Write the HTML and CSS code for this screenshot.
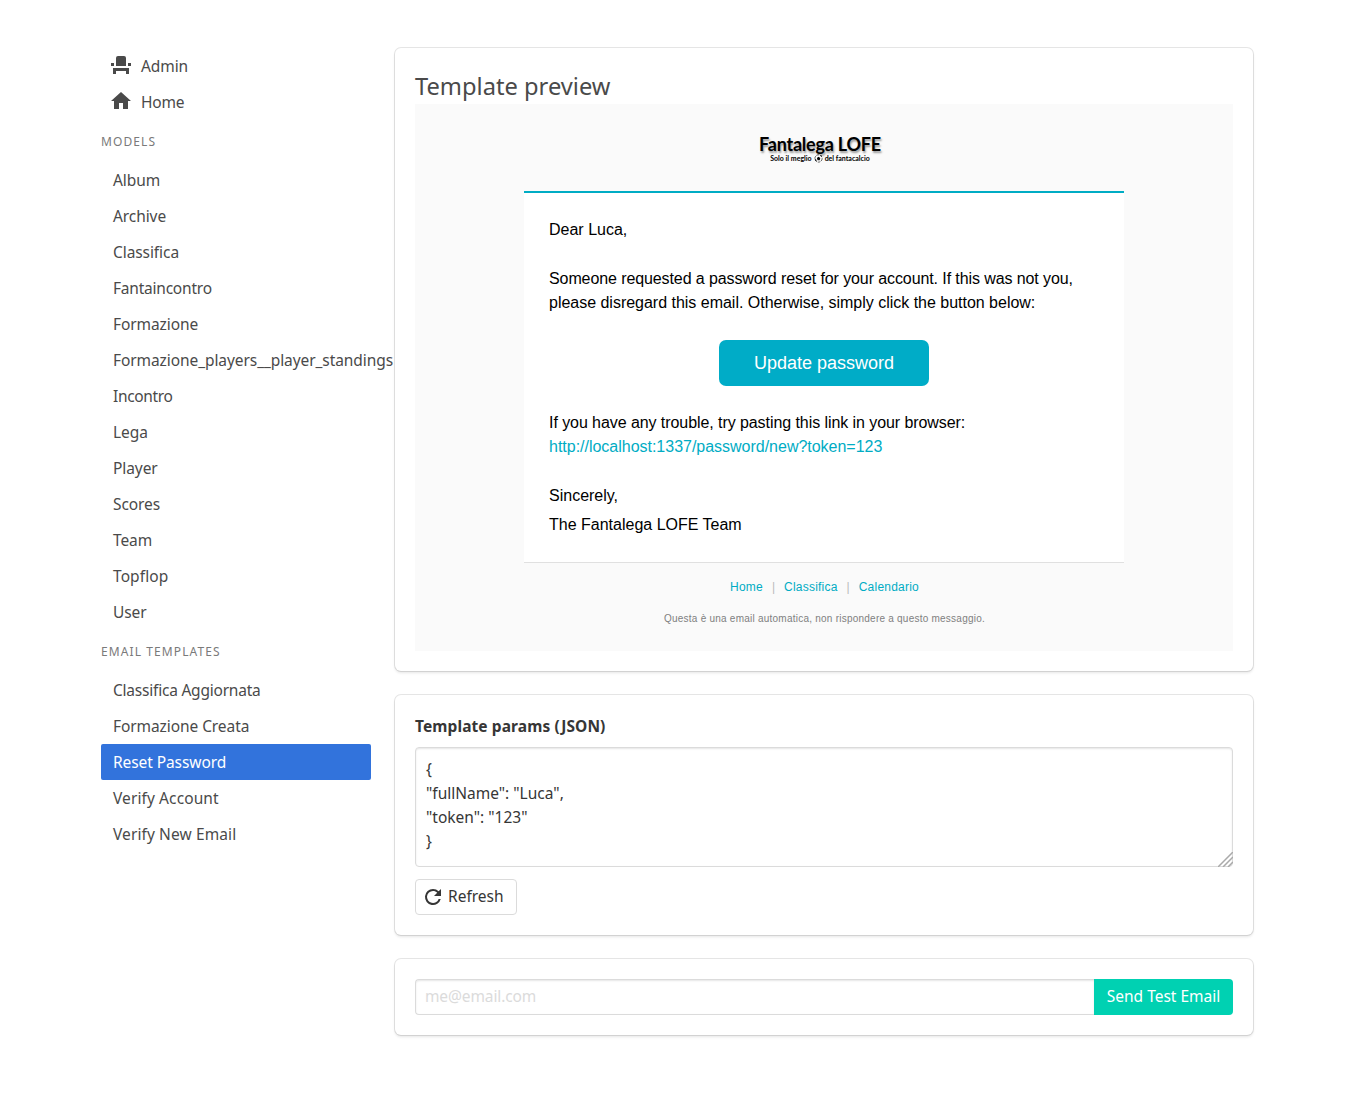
FILE: index.html
```html
<!DOCTYPE html>
<html lang="en">
<head>
<meta charset="utf-8">
<title>Template preview</title>
<link rel="stylesheet" href="styles.css">
</head>
<body>
<div class="container">
  <aside class="menu">
    <ul class="menu-list main-nav">
      <li><a><svg class="icon" viewBox="0 0 24 24"><path d="M9 3h6a2 2 0 0 1 2 2v8H7V5a2 2 0 0 1 2-2zM4 15h16v6h-3v-3H7v3H4zM2 10h3v3H2zM19 10h3v3h-3z"/></svg><span>Admin</span></a></li>
      <li><a><svg class="icon" viewBox="0 0 24 24"><path d="M10 20v-6h4v6h5v-8h3L12 3 2 12h3v8z"/></svg><span class="tight">Home</span></a></li>
    </ul>
    <p class="menu-label">Models</p>
    <ul class="menu-list">
      <li><a>Album</a></li>
      <li><a>Archive</a></li>
      <li><a>Classifica</a></li>
      <li><a class="tight">Fantaincontro</a></li>
      <li><a>Formazione</a></li>
      <li><a>Formazione_players__player_standings</a></li>
      <li><a class="tighter">Incontro</a></li>
      <li><a>Lega</a></li>
      <li><a>Player</a></li>
      <li><a>Scores</a></li>
      <li><a>Team</a></li>
      <li><a class="loose">Topflop</a></li>
      <li><a>User</a></li>
    </ul>
    <p class="menu-label">Email templates</p>
    <ul class="menu-list">
      <li><a class="tight">Classifica Aggiornata</a></li>
      <li><a>Formazione Creata</a></li>
      <li><a class="is-active">Reset Password</a></li>
      <li><a class="loose">Verify Account</a></li>
      <li><a class="loose">Verify New Email</a></li>
    </ul>
  </aside>
  <main class="content">
    <section class="box">
      <h1 class="title">Template preview</h1>
      <div class="email">
        <div class="email-header">
          <div class="logo">
            <span class="logo-name">Fantalega LOFE</span>
            <span class="logo-tag"><span>Solo il meglio</span><svg class="ball" viewBox="0 0 10 10"><circle cx="5" cy="5" r="4" fill="#fff" stroke="#222" stroke-width=".8" stroke-dasharray="3 1"/><path d="M5 3l2 1.5L6.3 7H4L3.2 4.5zM8 1l1 2-2-1zM1 7l2 1-1-3z"/></svg><span>del fantacalcio</span></span>
          </div>
        </div>
        <div class="email-body">
          <p>Dear Luca,</p>
          <p><span class="line-long">Someone requested a password reset for your account. If this was not you,</span><br><span class="line">please disregard this email. Otherwise, simply click the button below:</span></p>
          <div class="email-action"><a class="email-button">Update password</a></div>
          <p><span class="line-mid">If you have any trouble, try pasting this link in your browser:</span><br><a class="link line">http://localhost:1337/password/new?token=123</a></p>
          <p>Sincerely,</p>
          <p class="team">The Fantalega LOFE Team</p>
        </div>
        <div class="email-links"><a>Home</a><i>|</i><a>Classifica</a><i>|</i><a>Calendario</a></div>
        <p class="email-note">Questa è una email automatica, non rispondere a questo messaggio.</p>
      </div>
    </section>
    <section class="box">
      <label class="label" for="params">Template params (JSON)</label>
      <div class="control">
        <textarea class="textarea" id="params">{
"fullName": "Luca",
"token": "123"
}</textarea>
        <svg class="grip" viewBox="0 0 15 15"><path d="M0 15L15 0M5 15L15 5M10 15l5-5"/></svg>
      </div>
      <button class="button"><svg class="refresh" viewBox="0 0 24 24"><path d="M17.65 6.35A7.96 7.96 0 0 0 12 4a8 8 0 1 0 7.73 10h-2.08A6 6 0 1 1 12 6c1.66 0 3.14.69 4.22 1.78L13 11h7V4z"/></svg><span>Refresh</span></button>
    </section>
    <section class="box field">
      <input class="input" placeholder="me@email.com">
      <button class="send">Send Test Email</button>
    </section>
  </main>
</div>
</body>
</html>
```
FILE: styles.css
```css
* { box-sizing: border-box; margin: 0; padding: 0; }
body { background: #fff; color: #4a4a4a; font: 15.5px/24px "Noto Sans", sans-serif; height: 1107px; overflow: hidden; }
.container { display: flex; gap: 24px; width: 1152px; margin: 48px auto 0; }
.menu { width: 270px; flex: none; }
.menu-list { list-style: none; letter-spacing: -.08px; }
.menu-list a { display: flex; align-items: center; height: 36px; padding: 0 12px; border-radius: 2px; white-space: nowrap; }
.menu-list .is-active { background: #3273dc; color: #fff; }
.menu-list .tight { letter-spacing: -.22px; }
.menu-list .tighter { letter-spacing: -.34px; }
.menu-list .loose { letter-spacing: .1px; }
.main-nav a { padding: 0 8px; gap: 8px; }
.icon { width: 24px; height: 24px; margin-bottom: 2px; fill: currentColor; }
.menu-label { margin: 13px 0 11px; color: #7a7a7a; font-size: 12px; line-height: 18px; letter-spacing: 1.1px; text-transform: uppercase; }
.content { width: 858px; flex: none; }
.box { padding: 20px; border-radius: 6px; background: #fff; box-shadow: 0 2px 3px rgba(10,10,10,.1), 0 0 0 1px rgba(10,10,10,.1); }
.box + .box { margin-top: 24px; }
.title { font-size: 23.7px; font-weight: 400; line-height: 36px; }
.email { height: 547px; background: #fafafa; color: #000; font: 16px/24px "Liberation Sans", Arial, sans-serif; }
.email-header { height: 87px; padding-top: 30px; }
.logo { width: 122px; margin: 0 auto; transform: translateX(-4px); color: #000; font-family: "Lato", sans-serif; white-space: nowrap; }
.logo-name { display: block; font-size: 18px; font-weight: 700; line-height: 20px; letter-spacing: -.22px; text-shadow: 1px 2px 2px #999; }
.logo-tag { display: flex; align-items: center; justify-content: center; gap: 2px; font-size: 7px; font-weight: 700; line-height: 9px; }
.ball { width: 9px; height: 9px; }
.email-body { width: 600px; height: 372px; margin: 0 auto; padding: 25px 25px 0; background: #fff; border-top: 2px solid #00acc4; border-bottom: 1px solid #e0e0e0; }
.email-body p + p { margin-top: 25px; }
.line { letter-spacing: -.015px; }
.line-mid { letter-spacing: -.07px; }
.line-long { letter-spacing: -.097px; }
.email-action { padding: 25px 0; text-align: center; }
.email-button { display: block; width: 210px; height: 46px; margin: 0 auto; border-radius: 7px; background: #00acc7; color: #fff; font-size: 18px; line-height: 46px; }
.link, .email-links a { color: #00acc4; }
.email-body p.team { margin-top: 5px; }
.email-links { display: flex; justify-content: center; gap: 9px; margin-top: 15px; padding-left: 1px; font-size: 12px; line-height: 18px; }
.email-links a { letter-spacing: .22px; }
.email-links i { color: #bbb; font-style: normal; }
.email-note { margin-top: 15px; padding-left: 1px; color: #808080; font-size: 10px; line-height: 16px; letter-spacing: .235px; text-align: center; }
.label { display: block; height: 24px; margin-bottom: 8px; color: #363636; font-weight: 700; line-height: 22px; letter-spacing: .1px; }
.control { position: relative; }
.textarea { display: block; width: 100%; height: 120px; padding: 9px 10px; border: 1px solid #dbdbdb; border-radius: 4px; box-shadow: inset 0 1px 2px rgba(10,10,10,.1); color: #363636; font: inherit; resize: none; outline: 0; }
.grip { position: absolute; right: 0; bottom: 0; width: 15px; height: 15px; fill: none; stroke: #aaa; stroke-width: 1.5; }
.button { display: flex; align-items: center; gap: 3px; width: 102px; height: 36px; margin-top: 12px; padding: 0 5px; border: 1px solid #dbdbdb; border-radius: 4px; background: #fff; color: #363636; font: inherit; }
.button span { padding-bottom: 2px; }
.refresh { width: 24px; height: 24px; fill: currentColor; }
.field { display: flex; }
.input { flex: 1; height: 36px; padding: 0 9px 2px; border: 1px solid #dbdbdb; border-right: 0; border-radius: 4px 0 0 4px; box-shadow: inset 0 1px 2px rgba(10,10,10,.1); font: inherit; letter-spacing: -.12px; }
.input::placeholder { color: #dbdbdb; }
.send { width: 139px; height: 36px; padding-bottom: 2px; border: 0; border-radius: 0 4px 4px 0; background: #00d1b2; color: #fff; font: inherit; white-space: nowrap; }
```
